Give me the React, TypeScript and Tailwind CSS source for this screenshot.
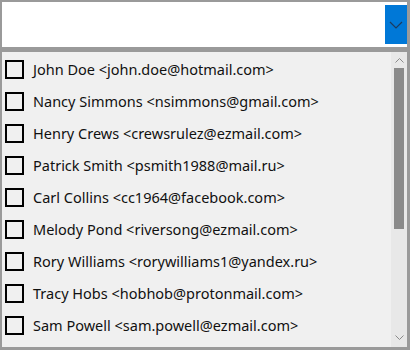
import React from "react";

const items = [
  "John Doe <john.doe@hotmail.com>",
  "Nancy Simmons <nsimmons@gmail.com>",
  "Henry Crews <crewsrulez@ezmail.com>",
  "Patrick Smith <psmith1988@mail.ru>",
  "Carl Collins <cc1964@facebook.com>",
  "Melody Pond <riversong@ezmail.com>",
  "Rory Williams <rorywilliams1@yandex.ru>",
  "Tracy Hobs <hobhob@protonmail.com>",
  "Sam Powell <sam.powell@ezmail.com>",
];

export default function App() {
  return (
    <div
      className="w-[410px] h-[350px] bg-[#9a9a9a] flex flex-col pl-[2px] pt-[2px] pr-[3px] pb-[3px] overflow-hidden"
      style={{ fontFamily: '"Noto Sans", "Open Sans", sans-serif' }}
    >
      <div className="h-[45px] bg-white flex justify-end items-start pt-[3px] shrink-0">
        <div className="w-[22px] h-[39px] bg-[#0078d7] flex items-center justify-center">
          <svg width="14" height="8" viewBox="0 0 14 8">
            <path d="M1 1 L7 7 L13 1" fill="none" stroke="#1d3b5e" strokeWidth="1.2" />
          </svg>
        </div>
      </div>
      <div className="h-[5px] shrink-0" />
      <div className="flex-1 flex bg-[#f0f0f0] min-h-0">
        <div className="flex-1 flex flex-col pt-[1px]">
          {items.map((t) => (
            <div key={t} className="h-[32px] flex items-center shrink-0">
              <div className="ml-[3px] w-[19px] h-[19px] border-2 border-black shrink-0" />
              <span className="ml-[9px] text-[14.5px] text-[#111] whitespace-nowrap leading-none">{t}</span>
            </div>
          ))}
        </div>
        <div className="w-[16px] bg-[#e8e8e8] flex flex-col items-center">
          <div className="h-[16px] flex items-center justify-center shrink-0">
            <svg width="9" height="5" viewBox="0 0 9 5">
              <path d="M0.5 4.5 L4.5 0.5 L8.5 4.5" fill="none" stroke="#8a8a8a" strokeWidth="1" />
            </svg>
          </div>
          <div className="w-[10px] h-[161px] bg-[#8a8a8a] shrink-0" />
          <div className="flex-1" />
          <div className="h-[16px] flex items-center justify-center shrink-0 mb-[2px]">
            <svg width="9" height="5" viewBox="0 0 9 5">
              <path d="M0.5 0.5 L4.5 4.5 L8.5 0.5" fill="none" stroke="#8a8a8a" strokeWidth="1" />
            </svg>
          </div>
        </div>
      </div>
    </div>
  );
}
